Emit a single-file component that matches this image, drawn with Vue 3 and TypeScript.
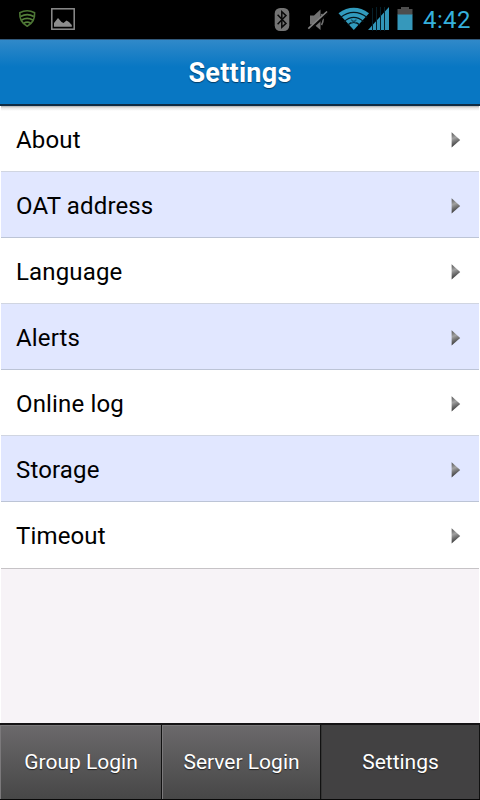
<script setup lang="ts">
import { ref } from 'vue'

const items: string[] = ['About', 'OAT address', 'Language', 'Alerts', 'Online log', 'Storage', 'Timeout']
const tabs: string[] = ['Group Login', 'Server Login', 'Settings']
const activeTab = ref<string>('Settings')
</script>

<template>
  <div class="screen">
    <div class="status">
      <svg class="left-icons" width="80" height="39" viewBox="0 0 80 39" fill="none">
        <path d="M19.8 12.8Q27.2 8.6 34.6 12.8Q35.2 22.2 27.2 26.2Q19.2 22.2 19.8 12.8Z" stroke="#4c7534" stroke-width="1.6" />
        <path d="M20.6 16.4Q27.2 12.9 33.8 16.4M21.6 20Q27.2 16.8 32.8 20M23.8 23.2Q27.2 21.2 30.6 23.2" stroke="#55803a" stroke-width="1.7" />
        <rect x="51.8" y="8.8" width="22.4" height="20.4" stroke="#8d8d8d" stroke-width="1.5" />
        <path d="M54 26.8V23L58 18L61.5 22L63.5 23L66.5 20.5L69 22L71.8 25V26.8Z" fill="#8d8d8d" />
      </svg>
      <svg class="right-icons" width="150" height="39" viewBox="270 0 150 39" fill="none">
        <rect x="274.7" y="8" width="14.6" height="23" rx="5.5" fill="#747474" />
        <path d="M277.6 14.7L286 23.4L281.8 27.3V11.7L286 15.6L277.6 24.3" stroke="#090909" stroke-width="1.5" />
        <path d="M310 15.5H314L320.5 9.5V30L314 24.5H310Z" fill="#727272" />
        <path d="M321.5 14Q324.8 19.5 321.5 25" stroke="#727272" stroke-width="1.6" />
        <path d="M308.8 30L327.8 12.9" stroke="#050505" stroke-width="3" />
        <path d="M308.3 28.7L327 11.5" stroke="#858585" stroke-width="1.6" />
        <path d="M338.5 13.2Q353.7 2.4 369 13.2L353.8 30Z" fill="#319bbd" />
        <path d="M340.4 17.4Q353.7 7.2 367.2 17.4M344 21.6Q353.7 13.2 363.6 21.6M347.7 25Q353.7 19.5 359.9 25" stroke="#06161d" stroke-width="1.2" />
        <path d="M351 19.8L356.5 23M356.5 19.8L351 23" stroke="#14546a" stroke-width="1.3" />
        <path d="M368 30L389 7V30Z" fill="#3195b8" />
        <path d="M372.5 8V31M376.5 7V31M380.5 7V31M384.5 7V31" stroke="#06202a" stroke-width="1" />
        <path d="M397.5 9H401V7H409V9H412.5V15H397.5Z" fill="#4d4d4d" />
        <rect x="397.5" y="14.5" width="15" height="15.5" fill="#3698bb" />
      </svg>
      <span class="clock">4:42</span>
    </div>
    <header class="header"><h1>Settings</h1></header>
    <main class="content">
      <ul class="list">
        <li v-for="item in items" :key="item" class="row">
          <span>{{ item }}</span>
          <svg width="10" height="16" viewBox="0 0 10 16">
            <defs>
              <linearGradient id="arrow" x1="0" y1="0" x2="0.25" y2="1">
                <stop offset="0" stop-color="#555" />
                <stop offset="0.42" stop-color="#a2a2a2" />
                <stop offset="1" stop-color="#303030" />
              </linearGradient>
            </defs>
            <path d="M0.6 0.3L9.2 8L0.6 15.5Z" fill="url(#arrow)" />
          </svg>
        </li>
      </ul>
    </main>
    <nav class="tabs">
      <button v-for="tab in tabs" :key="tab" class="tab" :class="{ active: tab === activeTab }" @click="activeTab = tab">{{ tab }}</button>
    </nav>
  </div>
</template>

<style scoped>
.screen {
  box-sizing: border-box;
  width: 480px;
  height: 800px;
  display: flex;
  flex-direction: column;
  overflow: hidden;
  background: #f7f3f7;
  font-family: Roboto, "Liberation Sans", sans-serif;
}
.status {
  height: 39px;
  flex: none;
  display: flex;
  background: #000;
}
.right-icons { margin-left: 190px; }
.clock {
  margin-left: 3px;
  line-height: 40px;
  font-size: 24px;
  letter-spacing: 0.4px;
  color: #35b0dc;
}
.header {
  box-sizing: border-box;
  height: 67px;
  flex: none;
  display: flex;
  align-items: center;
  justify-content: center;
  border-top: 1px solid #31587a;
  border-bottom: 2px solid #102c43;
  background: linear-gradient(#3089c9, #0877c3 42%, #0877c3);
}
h1 {
  margin: 0;
  padding-top: 2px;
  font-size: 27px;
  line-height: 32px;
  font-weight: 700;
  letter-spacing: 0.25px;
  color: #fff;
  text-shadow: 0 1px 1px #043c66;
}
.content {
  flex: 1;
  padding: 0 1px;
  box-shadow: inset 1px 0 #fff, inset -1px 0 #fff;
}
.list {
  margin: 0;
  padding: 0;
  list-style: none;
}
.row {
  box-sizing: border-box;
  height: 66px;
  display: flex;
  align-items: center;
  justify-content: space-between;
  padding: 2px 18px 0 15px;
  border-bottom: 1px solid #d0d5e1;
  background: #fff;
  font-size: 24px;
  letter-spacing: 0.15px;
  color: #000;
}
.row:nth-child(even) {
  background: #e1e7ff;
  border-bottom-color: #bcc4d6;
}
.row:first-child { background: linear-gradient(#b0b0b0, #e8e8e8 2px, #fff 5px); }
.row:last-child {
  height: 67px;
  border-bottom-color: #c6c3c6;
}
.tabs {
  box-sizing: border-box;
  flex: none;
  height: 77px;
  display: grid;
  grid-template-columns: 162px 159px 159px;
  border-top: 2px solid #151315;
  border-bottom: 1px solid #080808;
}
.tab {
  margin: 0;
  padding: 0 0 1px 1px;
  border: 0;
  border-right: 1px solid #111;
  box-shadow: inset 1px 1px #7b797b;
  background: linear-gradient(#6b696b, #474747);
  font-family: inherit;
  font-size: 21px;
  letter-spacing: 0;
  color: #fff;
  text-shadow: 0 1px 1px #222;
}
.tab.active {
  background: #424142;
  box-shadow: inset 1px 0 #353535;
}
</style>

<style>
body { margin: 0; }
</style>
